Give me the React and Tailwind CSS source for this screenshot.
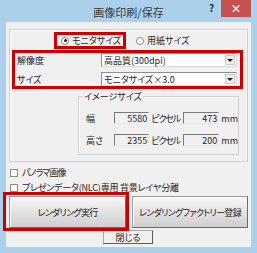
// 画像印刷/保存 ダイアログ
const jp = "font-['Noto_Sans_CJK_JP',sans-serif] [font-feature-settings:'palt']";

function Radio({ checked }) {
  return (
    <span className="grid h-[8px] w-[8px] place-items-center rounded-full border border-[#8a8a8a] bg-white">
      {checked && <span className="h-[3px] w-[3px] rounded-full bg-[#222]" />}
    </span>
  );
}

function Select({ value }) {
  return (
    <div className="flex h-[14px] w-[136px] items-center border border-[#8e8e8e] border-b-[#d8d8d8] border-r-[#d8d8d8] bg-white pl-[2px]">
      <span className="flex-1">{value}</span>
      <span className="mr-[1px] grid h-[10px] w-[10px] place-items-center border border-[#c8c8c8] bg-[#ececec]">
        <span className="h-0 w-0 border-x-[3px] border-t-[3px] border-x-transparent border-t-[#222]" />
      </span>
    </div>
  );
}

function Field({ value, w }) {
  return (
    <div className={`flex h-[12px] ${w} items-center justify-end border border-[#7b7b7b] border-b-[#e8e8e8] border-r-[#e8e8e8] bg-[#f0f0f0] pr-[1px]`}>
      {value}
    </div>
  );
}

function SizeRow({ label, px, mm }) {
  return (
    <div className="flex h-[12px] items-center">
      <span className="w-[29px]">{label}</span>
      <Field value={px} w="w-[36px]" />
      <span className="ml-[2px] w-[33px] tracking-[-1.2px]">ピクセル</span>
      <Field value={mm} w="w-[37px]" />
      <span className="ml-[2px]">mm</span>
    </div>
  );
}

function Check({ label, track }) {
  return (
    <div className="flex h-[9px] items-center gap-[4px] pl-[1px]">
      <span className="h-[8px] w-[8px] border border-[#8a8a8a] bg-white" />
      <span className={track}>{label}</span>
    </div>
  );
}

const btn =
  "grid h-[32px] place-items-center border border-[#9a9a9a] border-b-[#6a6a6a] border-r-[#6a6a6a] bg-gradient-to-b from-[#f6f6f6] to-[#cfcfcf] shadow-[inset_1px_1px_0_#fff] tracking-[-0.7px]";

export default function App() {
  return (
    <div className={`relative h-[253px] w-[257px] overflow-hidden bg-[#abd0ec] text-[9px] leading-none text-[#1e1e1e] ${jp}`}>
      {/* タイトルバー */}
      <div className="flex h-[22px] items-center justify-center pt-[2px] text-[11px] text-[#3a3a3a]">
        画像印刷/保存
      </div>
      <span className="absolute left-[209px] top-[3px] text-[10px] font-bold text-[#333]">?</span>
      <div className="absolute left-[221px] top-0 grid h-[17px] w-[30px] place-items-center bg-[#c75050] text-[11px] font-bold text-white">
        ×
      </div>

      {/* クライアント領域 */}
      <div className="mx-[6px] h-[225px] bg-[#f0f0f0] px-[3px] pt-[7px]">
        <div className="h-[133px] border border-[#cfcfcf] shadow-[inset_1px_1px_0_#fff]">
          <div className="mt-[2px] flex items-center pl-[44px]">
            <div className="flex h-[17px] w-[72px] items-center gap-[3px] border-[3px] border-[#cc0000] pl-[4px]">
              <Radio checked />
              <span>モニタサイズ</span>
            </div>
            <div className="ml-[10px] flex items-center gap-[3px]">
              <Radio />
              <span>用紙サイズ</span>
            </div>
          </div>

          <div className="ml-[2px] mr-[4px] mt-[1px] flex flex-col gap-[5px] border-[3px] border-[#cc0000]">
            <div className="flex items-center">
              <span className="w-[86px] pl-[2px]">解像度</span>
              <Select value="高品質(300dpi)" />
            </div>
            <div className="flex items-center">
              <span className="w-[86px] pl-[2px]">サイズ</span>
              <Select value="モニタサイズ×3.0" />
            </div>
          </div>

          <div className="relative ml-[68px] mt-[7px] flex h-[59px] w-[161px] flex-col gap-[10px] border border-[#cfcfcf] pl-[7px] pt-[15px] shadow-[inset_1px_1px_0_#fff]">
            <span className="absolute -top-[5px] left-[4px] bg-[#f0f0f0] px-[1px]">イメージサイズ</span>
            <SizeRow label="幅" px="5580" mm="473" />
            <SizeRow label="高さ" px="2355" mm="200" />
          </div>
        </div>

        <div className="mt-[6px]">
          <Check label="パノラマ画像" track="tracking-[-1px]" />
        </div>
        <div className="mt-[6px]">
          <Check label="プレゼンデータ(NLC)専用 背景レイヤ分離" track="tracking-[-0.2px]" />
        </div>

        <div className="mt-[4px] flex gap-[6px]">
          <div className="relative">
            <div className={`${btn} w-[117px]`}>レンダリング実行</div>
            <div className="pointer-events-none absolute -bottom-[3px] -left-[6px] -right-[3px] -top-[4px] z-10 border-[3px] border-[#cc0000]" />
          </div>
          <div className={`${btn} w-[116px]`}>レンダリングファクトリー登録</div>
        </div>

        <div className="ml-[94px] mt-[2px] grid h-[14px] w-[50px] place-items-center border border-[#a8a8a8] border-b-[#5e5e5e] border-r-[#5e5e5e] bg-[#f0f0f0]">
          閉じる
        </div>
      </div>
    </div>
  );
}
